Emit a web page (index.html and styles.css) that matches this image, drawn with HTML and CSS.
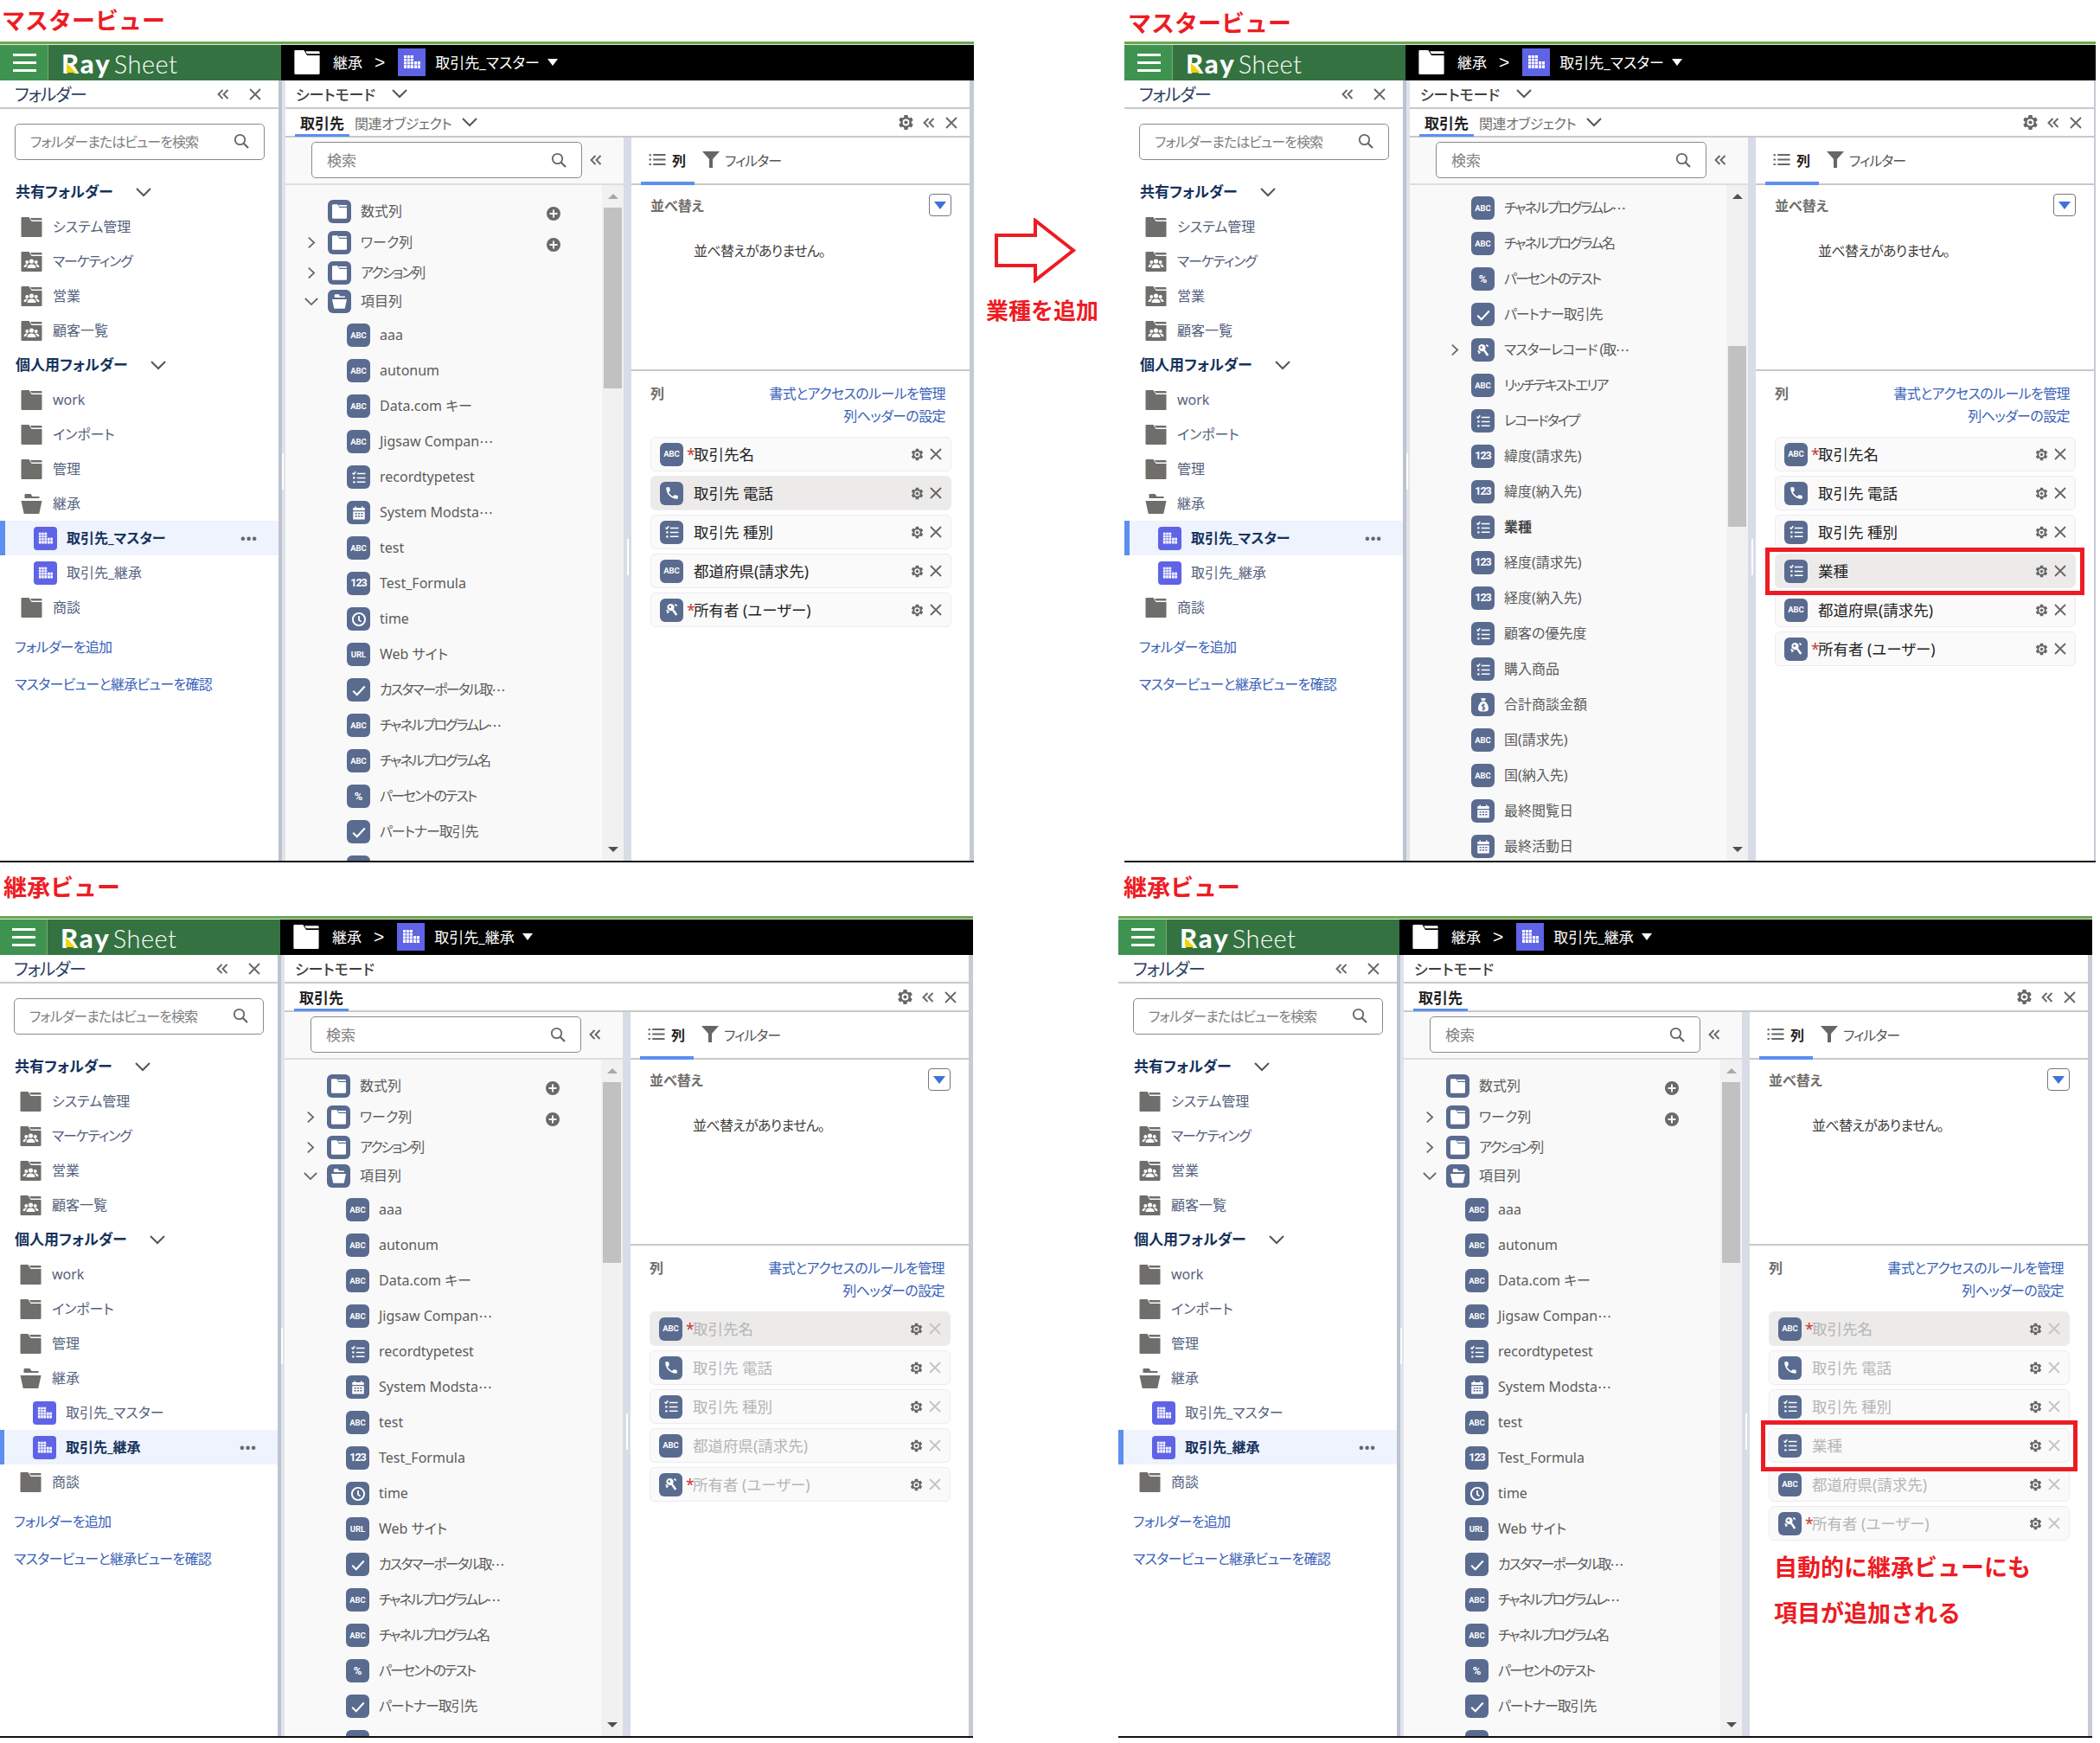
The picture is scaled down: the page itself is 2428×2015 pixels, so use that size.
FILE: index.html
```html
<!DOCTYPE html>
<html lang="ja">
<head>
    <meta charset="UTF-8">
    <title>マスタービューと継承ビュー</title>
    <link rel="stylesheet" href="styles.css">
</head>
<body>
    <svg class="sprite" aria-hidden="true">
        <symbol id="i-folder" viewBox="0 0 24 23"><path d="M1 0h8l3 5h12v17q0 1-1 1H1q-1 0-1-1V1q0-1 1-1zM10.500 1H23q1 0 1 1v1.500H12z"/></symbol>
        <symbol id="i-folder-open" viewBox="0 0 24 23"><path d="M5 0h6l2 3h8v2H4V1q0-1 1-1zM0 8h24l-3 14q0 1-1 1H4q-1 0-1-1z"/></symbol>
        <symbol id="i-group" viewBox="0 0 24 23"><path d="M1 0h8l3 5h12v17q0 1-1 1H1q-1 0-1-1V1q0-1 1-1zM10.500 1H23q1 0 1 1v1.500H12z"/><circle cx="12" cy="11" r="2.600" fill="#fff"/><circle cx="6.800" cy="12" r="2" fill="#fff"/><circle cx="17.200" cy="12" r="2" fill="#fff"/><path d="M7 19q0-4.500 5-4.500t5 4.500zM3 18q0-3.500 3.800-3.500l1 .5q-2 1-2.300 3zM21 18q0-3.500-3.800-3.500l-1 .5q2 1 2.300 3z" fill="#fff"/></symbol>
        <symbol id="i-view" viewBox="0 0 32 32"><path fill="#fff" d="M7 8h11v15H7zM19 15h7v8h-7z"/><path stroke="#5f63e6" stroke-width=".8" fill="none" d="M10.500 8v15M14.300 8v15M7 11.500h11M7 15h11M7 18.700h11M22.500 15v8M19 19h7"/></symbol>
        <symbol id="i-list" viewBox="0 0 24 24"><path fill="none" stroke="currentColor" stroke-width="2" d="M9 6h13M9 12.500h13M9 19h13M2 5l2 2 3-4"/><path fill="currentColor" d="M3 11h3v3H3zM3 17.500h3v3H3z"/></symbol>
        <symbol id="i-rows" viewBox="0 0 24 24"><path fill="none" stroke="currentColor" stroke-width="2.500" d="M6 5h18M6 12h18M6 19h18"/><path fill="currentColor" d="M0 4h3v2.500H0zM0 10.800h3v2.500H0zM0 17.700h3v2.500H0z"/></symbol>
        <symbol id="i-cal" viewBox="0 0 24 24"><path fill="currentColor" d="M6 2h2v2h8V2h2v2h3v4H3V4h3zM3 9.500h18V22H3zM6 12v2h3v-2zM10.500 12v2h3v-2zM15 12v2h3v-2zM6 16v2h3v-2zM10.500 16v2h3v-2zM15 16v2h3v-2z" fill-rule="evenodd"/></symbol>
        <symbol id="i-clock" viewBox="0 0 24 24"><circle cx="12" cy="12" r="9.500" fill="none" stroke="currentColor" stroke-width="2.600"/><path fill="none" stroke="currentColor" stroke-width="2.400" d="M12 6.500V13l3.500 2.500"/></symbol>
        <symbol id="i-check" viewBox="0 0 24 24"><path fill="none" stroke="currentColor" stroke-width="2.800" d="M3 13l6 6L21 6"/></symbol>
        <symbol id="i-phone" viewBox="0 0 24 24"><path fill="currentColor" d="M6.620 10.790c1.440 2.830 3.760 5.140 6.590 6.590l2.200-2.200c.270-.270.670-.360 1.020-.240 1.120.370 2.330.570 3.570.570.550 0 1 .450 1 1V20c0 .550-.450 1-1 1-9.390 0-17-7.610-17-17 0-.550.450-1 1-1h3.500c.550 0 1 .450 1 1 0 1.250.200 2.450.570 3.570.110.350.030.740-.250 1.020l-2.200 2.200z"/></symbol>
        <symbol id="i-key" viewBox="0 0 24 24"><path fill="currentColor" fill-rule="evenodd" d="M10 2.500a5.500 5.500 0 1 1-.01 0zM9 5.500a1.800 1.800 0 1 0 .01 0z"/><path fill="none" stroke="currentColor" stroke-width="3.400" d="M13 11.500l6 8.500"/><path fill="none" stroke="currentColor" stroke-width="2.200" d="M16.500 3.500l3 2.500M3.500 12.500l3 2.500-2 2"/></symbol>
        <symbol id="i-bag" viewBox="0 0 24 24"><path fill="currentColor" d="M8 1.500h8l-2 4h-4zM9.500 6.500h5C18 9 20 13 20 17q0 5-5 5H9q-5 0-5-5c0-4 2-8 5.500-10.500z"/><path fill="none" stroke="#5a6b90" stroke-width="1.500" d="M14.500 12q-2.500-1.300-4-.2t.5 2.500 3 1.700-.5 2.700q-2 .8-4-.5M12 9.500v11"/></symbol>
        <symbol id="i-gear" viewBox="0 0 24 24"><path fill="currentColor" fill-rule="evenodd" d="M19.140 12.940c.040-.300.060-.610.060-.940 0-.320-.020-.640-.070-.940l2.030-1.580a.490.490 0 0 0 .120-.610l-1.920-3.320a.488.488 0 0 0-.590-.220l-2.390.960c-.500-.380-1.030-.700-1.620-.940l-.360-2.540a.484.484 0 0 0-.480-.410h-3.840c-.240 0-.430.170-.470.410l-.360 2.540c-.590.240-1.130.570-1.620.940l-2.390-.960c-.220-.080-.470 0-.590.220L2.740 8.870c-.120.210-.080.470.120.610l2.030 1.580c-.050.300-.090.630-.090.940s.020.640.070.940l-2.030 1.580a.490.490 0 0 0-.120.610l1.920 3.320c.120.220.370.290.590.220l2.390-.960c.500.380 1.030.700 1.620.940l.360 2.540c.050.240.240.410.480.410h3.840c.240 0 .440-.170.470-.410l.360-2.540c.590-.240 1.130-.560 1.620-.940l2.390.96c.220.080.470 0 .590-.220l1.920-3.320c.120-.220.070-.470-.120-.610l-2.010-1.580zM12 16.500a4.500 4.500 0 1 1 0-9 4.500 4.500 0 0 1 0 9z"/><circle cx="12" cy="12" r="2.400" fill="currentColor"/></symbol>
        <symbol id="i-close" viewBox="0 0 14 14"><path fill="none" stroke="currentColor" stroke-width="1.800" d="M1 1l12 12M13 1L1 13"/></symbol>
        <symbol id="i-back" viewBox="0 0 14 12"><path fill="none" stroke="currentColor" stroke-width="1.900" d="M6.500 1L1.500 6l5 5M12.500 1l-5 5 5 5"/></symbol>
        <symbol id="i-down" viewBox="0 0 18 11"><path fill="none" stroke="currentColor" stroke-width="2" d="M1 1l8 8 8-8"/></symbol>
        <symbol id="i-right" viewBox="0 0 11 16"><path fill="none" stroke="currentColor" stroke-width="1.900" d="M2 1.500L9 8l-7 6.500"/></symbol>
        <symbol id="i-search" viewBox="0 0 18 18"><circle cx="7.500" cy="7.500" r="5.700" fill="none" stroke="currentColor" stroke-width="1.800"/><path stroke="currentColor" stroke-width="2.200" d="M11.500 11.500l5.500 5.500"/></symbol>
        <symbol id="i-plus" viewBox="0 0 16 16"><path fill="currentColor" fill-rule="evenodd" d="M8 0a8 8 0 1 1 0 16A8 8 0 0 1 8 0zM7 3.500v3.500H3.500v2H7v3.500h2V9h3.500V7H9V3.500z"/></symbol>
        <symbol id="i-filter" viewBox="0 0 20 19"><path fill="currentColor" d="M0 0h20l-8 9v10H8V9z"/></symbol>
    </svg>

    <main class="board">

        <section class="view">
            <h2 class="view-title">マスタービュー</h2>
            <div class="app">
                <header class="app-bar">
                    <div class="app-menu"><span></span><span></span><span></span></div>
                    <div class="app-logo"><b class="logo-ray">Ray</b><span class="logo-sheet">Sheet</span></div>
                    <div class="crumbs">
                        <svg class="crumb-folder"><use href="#i-folder"/></svg>
                        <span>継承</span><span class="crumb-sep">&gt;</span>
                        <svg class="crumb-view"><use href="#i-view"/></svg>
                        <span>取引先_マスター</span><i class="crumb-caret"></i>
                    </div>
                </header>
                <div class="app-body">
                    <aside class="sidebar">
                        <div class="side-head"><span>フォルダー</span><svg class="ic-back"><use href="#i-back"/></svg><svg class="ic-close"><use href="#i-close"/></svg></div>
                        <div class="search side-search"><span>フォルダーまたはビューを検索</span><svg class="ic-search"><use href="#i-search"/></svg></div>
                        <ul class="folders">
                            <li class="folder-head">共有フォルダー<svg class="ic-down"><use href="#i-down"/></svg></li>
                            <li class="folder"><svg><use href="#i-folder"/></svg>システム管理</li>
                            <li class="folder kana-mix"><svg><use href="#i-group"/></svg>マーケティング</li>
                            <li class="folder"><svg><use href="#i-group"/></svg>営業</li>
                            <li class="folder"><svg><use href="#i-group"/></svg>顧客一覧</li>
                            <li class="folder-head">個人用フォルダー<svg class="ic-down"><use href="#i-down"/></svg></li>
                            <li class="folder"><svg><use href="#i-folder"/></svg>work</li>
                            <li class="folder"><svg><use href="#i-folder"/></svg>インポート</li>
                            <li class="folder"><svg><use href="#i-folder"/></svg>管理</li>
                            <li class="folder"><svg><use href="#i-folder-open"/></svg>継承</li>
                            <li class="view-item is-active"><svg><use href="#i-view"/></svg>取引先_マスター<span class="more">•••</span></li>
                            <li class="view-item"><svg><use href="#i-view"/></svg>取引先_継承</li>
                            <li class="folder"><svg><use href="#i-folder"/></svg>商談</li>
                        </ul>
                        <a class="side-link side-link--add">フォルダーを追加</a>
                        <a class="side-link">マスタービューと継承ビューを確認</a>
                    </aside>
                    <div class="splitter"></div>
                    <div class="sheet">
                        <div class="mode-row">シートモード<svg class="ic-down"><use href="#i-down"/></svg></div>
                        <div class="tab-row">
                            <span class="tab is-active">取引先</span>
                            <span class="tab">関連オブジェクト</span><svg class="ic-down"><use href="#i-down"/></svg>
                            <div class="tab-tools"><svg class="ic-gear"><use href="#i-gear"/></svg><svg class="ic-back"><use href="#i-back"/></svg><svg class="ic-close"><use href="#i-close"/></svg></div>
                        </div>
                        <div class="panes">
                            <div class="fields">
                                <div class="fields-search"><div class="search"><span>検索</span><svg class="ic-search"><use href="#i-search"/></svg></div><svg class="ic-back"><use href="#i-back"/></svg></div>
                                <div class="fields-body">
                                    <ul class="tree">
                                        <li class="node"><span class="twisty"></span><svg class="fi"><use href="#i-folder"/></svg>数式列<svg class="ic-plus"><use href="#i-plus"/></svg></li>
                                        <li class="node"><span class="twisty"><svg><use href="#i-right"/></svg></span><svg class="fi"><use href="#i-folder"/></svg>ワーク列<svg class="ic-plus"><use href="#i-plus"/></svg></li>
                                        <li class="node kana"><span class="twisty"><svg><use href="#i-right"/></svg></span><svg class="fi"><use href="#i-folder"/></svg>アクション列</li>
                                        <li class="node"><span class="twisty"><svg><use href="#i-down"/></svg></span><svg class="fi"><use href="#i-folder-open"/></svg>項目列</li>
                                        <li class="leaf"><i class="fi">ABC</i>aaa</li>
                                        <li class="leaf"><i class="fi">ABC</i>autonum</li>
                                        <li class="leaf"><i class="fi">ABC</i>Data.com キー</li>
                                        <li class="leaf"><i class="fi">ABC</i>Jigsaw Compan<span class="ell">…</span></li>
                                        <li class="leaf"><i class="fi"><svg><use href="#i-list"/></svg></i>recordtypetest</li>
                                        <li class="leaf"><i class="fi"><svg><use href="#i-cal"/></svg></i>System Modsta<span class="ell">…</span></li>
                                        <li class="leaf"><i class="fi">ABC</i>test</li>
                                        <li class="leaf"><i class="fi fi--num">123</i>Test_Formula</li>
                                        <li class="leaf"><i class="fi"><svg><use href="#i-clock"/></svg></i>time</li>
                                        <li class="leaf"><i class="fi">URL</i>Web サイト</li>
                                        <li class="leaf kana"><i class="fi"><svg><use href="#i-check"/></svg></i>カスタマーポータル取<span class="ell">…</span></li>
                                        <li class="leaf kana"><i class="fi">ABC</i>チャネルプログラムレ<span class="ell">…</span></li>
                                        <li class="leaf kana"><i class="fi">ABC</i>チャネルプログラム名</li>
                                        <li class="leaf kana"><i class="fi fi--pct">%</i>パーセントのテスト</li>
                                        <li class="leaf kana-mix"><i class="fi"><svg><use href="#i-check"/></svg></i>パートナー取引先</li>
                                        <li class="leaf"><i class="fi"></i></li>
                                    </ul>
                                    <div class="scroll"><i class="arrow-up"></i><div class="thumb"></div><i class="arrow-down"></i></div>
                                </div>
                            </div>
                            <div class="splitter splitter--inner"></div>
                            <div class="setup">
                                <div class="setup-tabs"><span class="setup-tab is-active"><svg><use href="#i-rows"/></svg><b>列</b></span><span class="setup-tab"><svg><use href="#i-filter"/></svg>フィルター</span></div>
                                <div class="sort">
                                    <div class="sort-head"><b>並べ替え</b><span class="sort-btn"><i></i></span></div>
                                    <p class="sort-empty">並べ替えがありません。</p>
                                </div>
                                <div class="columns">
                                    <div class="columns-head"><b>列</b><div class="columns-links"><a>書式とアクセスのルールを管理</a><a>列ヘッダーの設定</a></div></div>
                                    <ul class="cards">
                                        <li class="card"><i class="fi">ABC</i><span class="req">*</span><span class="card-text">取引先名</span><svg class="ic-gear"><use href="#i-gear"/></svg><svg class="ic-close"><use href="#i-close"/></svg></li>
                                        <li class="card is-hover"><i class="fi"><svg><use href="#i-phone"/></svg></i><span class="card-text">取引先 電話</span><svg class="ic-gear"><use href="#i-gear"/></svg><svg class="ic-close"><use href="#i-close"/></svg></li>
                                        <li class="card"><i class="fi"><svg><use href="#i-list"/></svg></i><span class="card-text">取引先 種別</span><svg class="ic-gear"><use href="#i-gear"/></svg><svg class="ic-close"><use href="#i-close"/></svg></li>
                                        <li class="card"><i class="fi">ABC</i><span class="card-text">都道府県(請求先)</span><svg class="ic-gear"><use href="#i-gear"/></svg><svg class="ic-close"><use href="#i-close"/></svg></li>
                                        <li class="card"><i class="fi"><svg><use href="#i-key"/></svg></i><span class="req">*</span><span class="card-text">所有者 (ユーザー)</span><svg class="ic-gear"><use href="#i-gear"/></svg><svg class="ic-close"><use href="#i-close"/></svg></li>
                                    </ul>
                                </div>
                            </div>
                        </div>
                    </div>
                </div>
                <div class="edge"></div>
            </div>
            <div class="add-note">
                <svg class="add-arrow" viewBox="0 0 95 75"><path d="M2 20h45V3l44 34.500L47 72V55H2z"/></svg>
                <strong>業種を追加</strong>
            </div>
        </section>

        <section class="view view--right">
            <h2 class="view-title">マスタービュー</h2>
            <div class="app">
                <header class="app-bar">
                    <div class="app-menu"><span></span><span></span><span></span></div>
                    <div class="app-logo"><b class="logo-ray">Ray</b><span class="logo-sheet">Sheet</span></div>
                    <div class="crumbs">
                        <svg class="crumb-folder"><use href="#i-folder"/></svg>
                        <span>継承</span><span class="crumb-sep">&gt;</span>
                        <svg class="crumb-view"><use href="#i-view"/></svg>
                        <span>取引先_マスター</span><i class="crumb-caret"></i>
                    </div>
                </header>
                <div class="app-body">
                    <aside class="sidebar">
                        <div class="side-head"><span>フォルダー</span><svg class="ic-back"><use href="#i-back"/></svg><svg class="ic-close"><use href="#i-close"/></svg></div>
                        <div class="search side-search"><span>フォルダーまたはビューを検索</span><svg class="ic-search"><use href="#i-search"/></svg></div>
                        <ul class="folders">
                            <li class="folder-head">共有フォルダー<svg class="ic-down"><use href="#i-down"/></svg></li>
                            <li class="folder"><svg><use href="#i-folder"/></svg>システム管理</li>
                            <li class="folder kana-mix"><svg><use href="#i-group"/></svg>マーケティング</li>
                            <li class="folder"><svg><use href="#i-group"/></svg>営業</li>
                            <li class="folder"><svg><use href="#i-group"/></svg>顧客一覧</li>
                            <li class="folder-head">個人用フォルダー<svg class="ic-down"><use href="#i-down"/></svg></li>
                            <li class="folder"><svg><use href="#i-folder"/></svg>work</li>
                            <li class="folder"><svg><use href="#i-folder"/></svg>インポート</li>
                            <li class="folder"><svg><use href="#i-folder"/></svg>管理</li>
                            <li class="folder"><svg><use href="#i-folder-open"/></svg>継承</li>
                            <li class="view-item is-active"><svg><use href="#i-view"/></svg>取引先_マスター<span class="more">•••</span></li>
                            <li class="view-item"><svg><use href="#i-view"/></svg>取引先_継承</li>
                            <li class="folder"><svg><use href="#i-folder"/></svg>商談</li>
                        </ul>
                        <a class="side-link side-link--add">フォルダーを追加</a>
                        <a class="side-link">マスタービューと継承ビューを確認</a>
                    </aside>
                    <div class="splitter"></div>
                    <div class="sheet">
                        <div class="mode-row">シートモード<svg class="ic-down"><use href="#i-down"/></svg></div>
                        <div class="tab-row">
                            <span class="tab is-active">取引先</span>
                            <span class="tab">関連オブジェクト</span><svg class="ic-down"><use href="#i-down"/></svg>
                            <div class="tab-tools"><svg class="ic-gear"><use href="#i-gear"/></svg><svg class="ic-back"><use href="#i-back"/></svg><svg class="ic-close"><use href="#i-close"/></svg></div>
                        </div>
                        <div class="panes">
                            <div class="fields">
                                <div class="fields-search"><div class="search"><span>検索</span><svg class="ic-search"><use href="#i-search"/></svg></div><svg class="ic-back"><use href="#i-back"/></svg></div>
                                <div class="fields-body">
                                    <ul class="tree tree--scrolled">
                                        <li class="leaf kana"><i class="fi">ABC</i>チャネルプログラムレ<span class="ell">…</span></li>
                                        <li class="leaf kana"><i class="fi">ABC</i>チャネルプログラム名</li>
                                        <li class="leaf kana"><i class="fi fi--pct">%</i>パーセントのテスト</li>
                                        <li class="leaf kana-mix"><i class="fi"><svg><use href="#i-check"/></svg></i>パートナー取引先</li>
                                        <li class="leaf kana-mix"><span class="twisty"><svg><use href="#i-right"/></svg></span><i class="fi"><svg><use href="#i-key"/></svg></i>マスターレコード (取<span class="ell">…</span></li>
                                        <li class="leaf kana"><i class="fi">ABC</i>リッチテキストエリア</li>
                                        <li class="leaf kana"><i class="fi"><svg><use href="#i-list"/></svg></i>レコードタイプ</li>
                                        <li class="leaf"><i class="fi fi--num">123</i>緯度(請求先)</li>
                                        <li class="leaf"><i class="fi fi--num">123</i>緯度(納入先)</li>
                                        <li class="leaf is-used"><i class="fi"><svg><use href="#i-list"/></svg></i>業種</li>
                                        <li class="leaf"><i class="fi fi--num">123</i>経度(請求先)</li>
                                        <li class="leaf"><i class="fi fi--num">123</i>経度(納入先)</li>
                                        <li class="leaf"><i class="fi"><svg><use href="#i-list"/></svg></i>顧客の優先度</li>
                                        <li class="leaf"><i class="fi"><svg><use href="#i-list"/></svg></i>購入商品</li>
                                        <li class="leaf"><i class="fi"><svg><use href="#i-bag"/></svg></i>合計商談金額</li>
                                        <li class="leaf"><i class="fi">ABC</i>国(請求先)</li>
                                        <li class="leaf"><i class="fi">ABC</i>国(納入先)</li>
                                        <li class="leaf"><i class="fi"><svg><use href="#i-cal"/></svg></i>最終閲覧日</li>
                                        <li class="leaf"><i class="fi"><svg><use href="#i-cal"/></svg></i>最終活動日</li>
                                    </ul>
                                    <div class="scroll"><i class="arrow-up arrow-up--dark"></i><div class="thumb thumb--low"></div><i class="arrow-down"></i></div>
                                </div>
                            </div>
                            <div class="splitter splitter--inner"></div>
                            <div class="setup">
                                <div class="setup-tabs"><span class="setup-tab is-active"><svg><use href="#i-rows"/></svg><b>列</b></span><span class="setup-tab"><svg><use href="#i-filter"/></svg>フィルター</span></div>
                                <div class="sort">
                                    <div class="sort-head"><b>並べ替え</b><span class="sort-btn"><i></i></span></div>
                                    <p class="sort-empty">並べ替えがありません。</p>
                                </div>
                                <div class="columns">
                                    <div class="columns-head"><b>列</b><div class="columns-links"><a>書式とアクセスのルールを管理</a><a>列ヘッダーの設定</a></div></div>
                                    <ul class="cards">
                                        <li class="card"><i class="fi">ABC</i><span class="req">*</span><span class="card-text">取引先名</span><svg class="ic-gear"><use href="#i-gear"/></svg><svg class="ic-close"><use href="#i-close"/></svg></li>
                                        <li class="card"><i class="fi"><svg><use href="#i-phone"/></svg></i><span class="card-text">取引先 電話</span><svg class="ic-gear"><use href="#i-gear"/></svg><svg class="ic-close"><use href="#i-close"/></svg></li>
                                        <li class="card"><i class="fi"><svg><use href="#i-list"/></svg></i><span class="card-text">取引先 種別</span><svg class="ic-gear"><use href="#i-gear"/></svg><svg class="ic-close"><use href="#i-close"/></svg></li>
                                        <li class="card is-hover is-marked"><i class="fi"><svg><use href="#i-list"/></svg></i><span class="card-text">業種</span><svg class="ic-gear"><use href="#i-gear"/></svg><svg class="ic-close"><use href="#i-close"/></svg></li>
                                        <li class="card"><i class="fi">ABC</i><span class="card-text">都道府県(請求先)</span><svg class="ic-gear"><use href="#i-gear"/></svg><svg class="ic-close"><use href="#i-close"/></svg></li>
                                        <li class="card"><i class="fi"><svg><use href="#i-key"/></svg></i><span class="req">*</span><span class="card-text">所有者 (ユーザー)</span><svg class="ic-gear"><use href="#i-gear"/></svg><svg class="ic-close"><use href="#i-close"/></svg></li>
                                    </ul>
                                </div>
                            </div>
                        </div>
                    </div>
                </div>
                <div class="edge"></div>
            </div>
        </section>

        <section class="view view--lower view--left-low">
            <h2 class="view-title">継承ビュー</h2>
            <div class="app">
                <header class="app-bar">
                    <div class="app-menu"><span></span><span></span><span></span></div>
                    <div class="app-logo"><b class="logo-ray">Ray</b><span class="logo-sheet">Sheet</span></div>
                    <div class="crumbs">
                        <svg class="crumb-folder"><use href="#i-folder"/></svg>
                        <span>継承</span><span class="crumb-sep">&gt;</span>
                        <svg class="crumb-view"><use href="#i-view"/></svg>
                        <span>取引先_継承</span><i class="crumb-caret"></i>
                    </div>
                </header>
                <div class="app-body">
                    <aside class="sidebar">
                        <div class="side-head"><span>フォルダー</span><svg class="ic-back"><use href="#i-back"/></svg><svg class="ic-close"><use href="#i-close"/></svg></div>
                        <div class="search side-search"><span>フォルダーまたはビューを検索</span><svg class="ic-search"><use href="#i-search"/></svg></div>
                        <ul class="folders">
                            <li class="folder-head">共有フォルダー<svg class="ic-down"><use href="#i-down"/></svg></li>
                            <li class="folder"><svg><use href="#i-folder"/></svg>システム管理</li>
                            <li class="folder kana-mix"><svg><use href="#i-group"/></svg>マーケティング</li>
                            <li class="folder"><svg><use href="#i-group"/></svg>営業</li>
                            <li class="folder"><svg><use href="#i-group"/></svg>顧客一覧</li>
                            <li class="folder-head">個人用フォルダー<svg class="ic-down"><use href="#i-down"/></svg></li>
                            <li class="folder"><svg><use href="#i-folder"/></svg>work</li>
                            <li class="folder"><svg><use href="#i-folder"/></svg>インポート</li>
                            <li class="folder"><svg><use href="#i-folder"/></svg>管理</li>
                            <li class="folder"><svg><use href="#i-folder-open"/></svg>継承</li>
                            <li class="view-item"><svg><use href="#i-view"/></svg>取引先_マスター</li>
                            <li class="view-item is-active"><svg><use href="#i-view"/></svg>取引先_継承<span class="more">•••</span></li>
                            <li class="folder"><svg><use href="#i-folder"/></svg>商談</li>
                        </ul>
                        <a class="side-link side-link--add">フォルダーを追加</a>
                        <a class="side-link">マスタービューと継承ビューを確認</a>
                    </aside>
                    <div class="splitter"></div>
                    <div class="sheet">
                        <div class="mode-row">シートモード</div>
                        <div class="tab-row">
                            <span class="tab is-active">取引先</span>
                            <div class="tab-tools"><svg class="ic-gear"><use href="#i-gear"/></svg><svg class="ic-back"><use href="#i-back"/></svg><svg class="ic-close"><use href="#i-close"/></svg></div>
                        </div>
                        <div class="panes">
                            <div class="fields">
                                <div class="fields-search"><div class="search"><span>検索</span><svg class="ic-search"><use href="#i-search"/></svg></div><svg class="ic-back"><use href="#i-back"/></svg></div>
                                <div class="fields-body">
                                    <ul class="tree">
                                        <li class="node"><span class="twisty"></span><svg class="fi"><use href="#i-folder"/></svg>数式列<svg class="ic-plus"><use href="#i-plus"/></svg></li>
                                        <li class="node"><span class="twisty"><svg><use href="#i-right"/></svg></span><svg class="fi"><use href="#i-folder"/></svg>ワーク列<svg class="ic-plus"><use href="#i-plus"/></svg></li>
                                        <li class="node kana"><span class="twisty"><svg><use href="#i-right"/></svg></span><svg class="fi"><use href="#i-folder"/></svg>アクション列</li>
                                        <li class="node"><span class="twisty"><svg><use href="#i-down"/></svg></span><svg class="fi"><use href="#i-folder-open"/></svg>項目列</li>
                                        <li class="leaf"><i class="fi">ABC</i>aaa</li>
                                        <li class="leaf"><i class="fi">ABC</i>autonum</li>
                                        <li class="leaf"><i class="fi">ABC</i>Data.com キー</li>
                                        <li class="leaf"><i class="fi">ABC</i>Jigsaw Compan<span class="ell">…</span></li>
                                        <li class="leaf"><i class="fi"><svg><use href="#i-list"/></svg></i>recordtypetest</li>
                                        <li class="leaf"><i class="fi"><svg><use href="#i-cal"/></svg></i>System Modsta<span class="ell">…</span></li>
                                        <li class="leaf"><i class="fi">ABC</i>test</li>
                                        <li class="leaf"><i class="fi fi--num">123</i>Test_Formula</li>
                                        <li class="leaf"><i class="fi"><svg><use href="#i-clock"/></svg></i>time</li>
                                        <li class="leaf"><i class="fi">URL</i>Web サイト</li>
                                        <li class="leaf kana"><i class="fi"><svg><use href="#i-check"/></svg></i>カスタマーポータル取<span class="ell">…</span></li>
                                        <li class="leaf kana"><i class="fi">ABC</i>チャネルプログラムレ<span class="ell">…</span></li>
                                        <li class="leaf kana"><i class="fi">ABC</i>チャネルプログラム名</li>
                                        <li class="leaf kana"><i class="fi fi--pct">%</i>パーセントのテスト</li>
                                        <li class="leaf kana-mix"><i class="fi"><svg><use href="#i-check"/></svg></i>パートナー取引先</li>
                                        <li class="leaf"><i class="fi"></i></li>
                                    </ul>
                                    <div class="scroll"><i class="arrow-up"></i><div class="thumb"></div><i class="arrow-down"></i></div>
                                </div>
                            </div>
                            <div class="splitter splitter--inner"></div>
                            <div class="setup">
                                <div class="setup-tabs"><span class="setup-tab is-active"><svg><use href="#i-rows"/></svg><b>列</b></span><span class="setup-tab"><svg><use href="#i-filter"/></svg>フィルター</span></div>
                                <div class="sort">
                                    <div class="sort-head"><b>並べ替え</b><span class="sort-btn"><i></i></span></div>
                                    <p class="sort-empty">並べ替えがありません。</p>
                                </div>
                                <div class="columns">
                                    <div class="columns-head"><b>列</b><div class="columns-links"><a>書式とアクセスのルールを管理</a><a>列ヘッダーの設定</a></div></div>
                                    <ul class="cards cards--locked">
                                        <li class="card is-hover"><i class="fi">ABC</i><span class="req">*</span><span class="card-text">取引先名</span><svg class="ic-gear"><use href="#i-gear"/></svg><svg class="ic-close"><use href="#i-close"/></svg></li>
                                        <li class="card"><i class="fi"><svg><use href="#i-phone"/></svg></i><span class="card-text">取引先 電話</span><svg class="ic-gear"><use href="#i-gear"/></svg><svg class="ic-close"><use href="#i-close"/></svg></li>
                                        <li class="card"><i class="fi"><svg><use href="#i-list"/></svg></i><span class="card-text">取引先 種別</span><svg class="ic-gear"><use href="#i-gear"/></svg><svg class="ic-close"><use href="#i-close"/></svg></li>
                                        <li class="card"><i class="fi">ABC</i><span class="card-text">都道府県(請求先)</span><svg class="ic-gear"><use href="#i-gear"/></svg><svg class="ic-close"><use href="#i-close"/></svg></li>
                                        <li class="card"><i class="fi"><svg><use href="#i-key"/></svg></i><span class="req">*</span><span class="card-text">所有者 (ユーザー)</span><svg class="ic-gear"><use href="#i-gear"/></svg><svg class="ic-close"><use href="#i-close"/></svg></li>
                                    </ul>
                                </div>
                            </div>
                        </div>
                    </div>
                </div>
                <div class="edge"></div>
            </div>
        </section>

        <section class="view view--lower view--right-low">
            <h2 class="view-title">継承ビュー</h2>
            <div class="app">
                <header class="app-bar">
                    <div class="app-menu"><span></span><span></span><span></span></div>
                    <div class="app-logo"><b class="logo-ray">Ray</b><span class="logo-sheet">Sheet</span></div>
                    <div class="crumbs">
                        <svg class="crumb-folder"><use href="#i-folder"/></svg>
                        <span>継承</span><span class="crumb-sep">&gt;</span>
                        <svg class="crumb-view"><use href="#i-view"/></svg>
                        <span>取引先_継承</span><i class="crumb-caret"></i>
                    </div>
                </header>
                <div class="app-body">
                    <aside class="sidebar">
                        <div class="side-head"><span>フォルダー</span><svg class="ic-back"><use href="#i-back"/></svg><svg class="ic-close"><use href="#i-close"/></svg></div>
                        <div class="search side-search"><span>フォルダーまたはビューを検索</span><svg class="ic-search"><use href="#i-search"/></svg></div>
                        <ul class="folders">
                            <li class="folder-head">共有フォルダー<svg class="ic-down"><use href="#i-down"/></svg></li>
                            <li class="folder"><svg><use href="#i-folder"/></svg>システム管理</li>
                            <li class="folder kana-mix"><svg><use href="#i-group"/></svg>マーケティング</li>
                            <li class="folder"><svg><use href="#i-group"/></svg>営業</li>
                            <li class="folder"><svg><use href="#i-group"/></svg>顧客一覧</li>
                            <li class="folder-head">個人用フォルダー<svg class="ic-down"><use href="#i-down"/></svg></li>
                            <li class="folder"><svg><use href="#i-folder"/></svg>work</li>
                            <li class="folder"><svg><use href="#i-folder"/></svg>インポート</li>
                            <li class="folder"><svg><use href="#i-folder"/></svg>管理</li>
                            <li class="folder"><svg><use href="#i-folder-open"/></svg>継承</li>
                            <li class="view-item"><svg><use href="#i-view"/></svg>取引先_マスター</li>
                            <li class="view-item is-active"><svg><use href="#i-view"/></svg>取引先_継承<span class="more">•••</span></li>
                            <li class="folder"><svg><use href="#i-folder"/></svg>商談</li>
                        </ul>
                        <a class="side-link side-link--add">フォルダーを追加</a>
                        <a class="side-link">マスタービューと継承ビューを確認</a>
                    </aside>
                    <div class="splitter"></div>
                    <div class="sheet">
                        <div class="mode-row">シートモード</div>
                        <div class="tab-row">
                            <span class="tab is-active">取引先</span>
                            <div class="tab-tools"><svg class="ic-gear"><use href="#i-gear"/></svg><svg class="ic-back"><use href="#i-back"/></svg><svg class="ic-close"><use href="#i-close"/></svg></div>
                        </div>
                        <div class="panes">
                            <div class="fields">
                                <div class="fields-search"><div class="search"><span>検索</span><svg class="ic-search"><use href="#i-search"/></svg></div><svg class="ic-back"><use href="#i-back"/></svg></div>
                                <div class="fields-body">
                                    <ul class="tree">
                                        <li class="node"><span class="twisty"></span><svg class="fi"><use href="#i-folder"/></svg>数式列<svg class="ic-plus"><use href="#i-plus"/></svg></li>
                                        <li class="node"><span class="twisty"><svg><use href="#i-right"/></svg></span><svg class="fi"><use href="#i-folder"/></svg>ワーク列<svg class="ic-plus"><use href="#i-plus"/></svg></li>
                                        <li class="node kana"><span class="twisty"><svg><use href="#i-right"/></svg></span><svg class="fi"><use href="#i-folder"/></svg>アクション列</li>
                                        <li class="node"><span class="twisty"><svg><use href="#i-down"/></svg></span><svg class="fi"><use href="#i-folder-open"/></svg>項目列</li>
                                        <li class="leaf"><i class="fi">ABC</i>aaa</li>
                                        <li class="leaf"><i class="fi">ABC</i>autonum</li>
                                        <li class="leaf"><i class="fi">ABC</i>Data.com キー</li>
                                        <li class="leaf"><i class="fi">ABC</i>Jigsaw Compan<span class="ell">…</span></li>
                                        <li class="leaf"><i class="fi"><svg><use href="#i-list"/></svg></i>recordtypetest</li>
                                        <li class="leaf"><i class="fi"><svg><use href="#i-cal"/></svg></i>System Modsta<span class="ell">…</span></li>
                                        <li class="leaf"><i class="fi">ABC</i>test</li>
                                        <li class="leaf"><i class="fi fi--num">123</i>Test_Formula</li>
                                        <li class="leaf"><i class="fi"><svg><use href="#i-clock"/></svg></i>time</li>
                                        <li class="leaf"><i class="fi">URL</i>Web サイト</li>
                                        <li class="leaf kana"><i class="fi"><svg><use href="#i-check"/></svg></i>カスタマーポータル取<span class="ell">…</span></li>
                                        <li class="leaf kana"><i class="fi">ABC</i>チャネルプログラムレ<span class="ell">…</span></li>
                                        <li class="leaf kana"><i class="fi">ABC</i>チャネルプログラム名</li>
                                        <li class="leaf kana"><i class="fi fi--pct">%</i>パーセントのテスト</li>
                                        <li class="leaf kana-mix"><i class="fi"><svg><use href="#i-check"/></svg></i>パートナー取引先</li>
                                        <li class="leaf"><i class="fi"></i></li>
                                    </ul>
                                    <div class="scroll"><i class="arrow-up"></i><div class="thumb"></div><i class="arrow-down"></i></div>
                                </div>
                            </div>
                            <div class="splitter splitter--inner"></div>
                            <div class="setup">
                                <div class="setup-tabs"><span class="setup-tab is-active"><svg><use href="#i-rows"/></svg><b>列</b></span><span class="setup-tab"><svg><use href="#i-filter"/></svg>フィルター</span></div>
                                <div class="sort">
                                    <div class="sort-head"><b>並べ替え</b><span class="sort-btn"><i></i></span></div>
                                    <p class="sort-empty">並べ替えがありません。</p>
                                </div>
                                <div class="columns">
                                    <div class="columns-head"><b>列</b><div class="columns-links"><a>書式とアクセスのルールを管理</a><a>列ヘッダーの設定</a></div></div>
                                    <ul class="cards cards--locked">
                                        <li class="card is-hover"><i class="fi">ABC</i><span class="req">*</span><span class="card-text">取引先名</span><svg class="ic-gear"><use href="#i-gear"/></svg><svg class="ic-close"><use href="#i-close"/></svg></li>
                                        <li class="card"><i class="fi"><svg><use href="#i-phone"/></svg></i><span class="card-text">取引先 電話</span><svg class="ic-gear"><use href="#i-gear"/></svg><svg class="ic-close"><use href="#i-close"/></svg></li>
                                        <li class="card"><i class="fi"><svg><use href="#i-list"/></svg></i><span class="card-text">取引先 種別</span><svg class="ic-gear"><use href="#i-gear"/></svg><svg class="ic-close"><use href="#i-close"/></svg></li>
                                        <li class="card is-marked is-marked--wide"><i class="fi"><svg><use href="#i-list"/></svg></i><span class="card-text">業種</span><svg class="ic-gear"><use href="#i-gear"/></svg><svg class="ic-close"><use href="#i-close"/></svg></li>
                                        <li class="card"><i class="fi">ABC</i><span class="card-text">都道府県(請求先)</span><svg class="ic-gear"><use href="#i-gear"/></svg><svg class="ic-close"><use href="#i-close"/></svg></li>
                                        <li class="card"><i class="fi"><svg><use href="#i-key"/></svg></i><span class="req">*</span><span class="card-text">所有者 (ユーザー)</span><svg class="ic-gear"><use href="#i-gear"/></svg><svg class="ic-close"><use href="#i-close"/></svg></li>
                                    </ul>
                                    <div class="auto-note"><p>自動的に継承ビューにも</p><p>項目が追加される</p></div>
                                </div>
                            </div>
                        </div>
                    </div>
                </div>
                <div class="edge"></div>
            </div>
        </section>

    </main>
</body>
</html>
```

FILE: styles.css
```css
:root {
    --red: #ed1c24;
    --navy: #16325c;
    --slate: #54617c;
    --field: #5a6b90;
    --view: #5f63e6;
    --line: #c9c9c9;
    --split: #d8dce6;
    --link: #3a62b8;
    --blue: #5b8ff0;
    --gray: #706e6b;
}

* {
    margin: 0;
    padding: 0;
    box-sizing: border-box;
}

html, body {
    height: 100%;
    overflow: hidden;
}

body {
    background-color: #fff;
    font-family: "Noto Sans", "Noto Sans CJK JP", sans-serif;
    font-size: 16px;
    font-feature-settings: "palt" 1;
    color: #3e3e3c;
}

ul {
    list-style: none;
}

i {
    font-style: normal;
}

svg {
    display: block;
    flex: none;
}

.sprite {
    display: none;
}

.board {
    display: grid;
    grid-template-columns: 1300px 1128px;
    grid-template-rows: 1011px 1004px;
}

/* 4 windows */
.view {
    position: relative;
    width: 1126px;
}

.view--right {
    width: 1123px;
}

.view--left-low {
    margin-left: -1px;
}

.view--right-low {
    margin-left: -7px;
}

.view-title {
    height: 48px;
    padding-left: 2px;
    font-size: 27px;
    line-height: 48px;
    font-weight: 700;
    color: var(--red);
    font-feature-settings: normal;
}

.view--right .view-title {
    padding: 3px 0 0 4px;
}

.view--lower .view-title {
    line-height: 30px;
    padding-left: 5px;
}

.view--right-low .view-title {
    padding-left: 6px;
}

.app {
    position: relative;
    display: flex;
    flex-direction: column;
    height: 949px;
    border-top: 3px solid #6aa84f;
    border-bottom: 2px solid #111;
    overflow: hidden;
}

.view--lower .app {
    height: 950px;
}

/* header bar */
.app-bar {
    display: flex;
    flex: none;
    height: 42px;
    border-top: 1px solid #dfe5da;
    background-color: #000;
    color: #fff;
}

.app-menu {
    display: flex;
    flex-direction: column;
    justify-content: center;
    gap: 6px;
    width: 56px;
    padding: 0 13px 0 15px;
    background-color: #3f9350;
    border-right: 1px solid #7fa86d;
}

.app-menu span {
    height: 3px;
    background-color: #fff;
}

.app-logo {
    display: flex;
    align-items: baseline;
    gap: 3px;
    width: 269px;
    padding: 3px 0 0 15px;
    background-color: #347341;
    line-height: 36px;
    font-feature-settings: normal;
}

.logo-ray {
    position: relative;
    font-family: Lato, sans-serif;
    font-size: 31px;
    font-weight: 900;
    letter-spacing: 2px;
}

.logo-ray::after {
    content: "";
    position: absolute;
    left: 6px;
    bottom: 7px;
    width: 11px;
    height: 11px;
    background-color: #f4d400;
    clip-path: polygon(0 0, 100% 100%, 0 100%);
}

.logo-sheet {
    font-family: Lato, sans-serif;
    font-size: 29px;
    font-weight: 300;
    letter-spacing: .5px;
}

.crumbs {
    display: flex;
    align-items: center;
    padding-left: 15px;
    padding-bottom: 2px;
    font-size: 17px;
}

.crumb-folder {
    width: 30px;
    height: 28px;
    margin-right: 15px;
    fill: #fff;
}

.crumb-sep {
    margin: 0 15px 0 14px;
    font-size: 21px;
    font-family: "Liberation Sans", sans-serif;
}

.crumb-view {
    width: 32px;
    height: 32px;
    margin-right: 11px;
    background-color: var(--view);
}

.crumb-caret {
    width: 0;
    height: 0;
    margin-left: 9px;
    border-left: 6px solid transparent;
    border-right: 6px solid transparent;
    border-top: 8px solid #fff;
}

.app-body {
    display: flex;
    flex: 1;
    min-height: 0;
    width: 1121px;
}

.edge {
    position: absolute;
    top: 42px;
    left: 1121px;
    bottom: 0;
    width: 5px;
    background-color: #c5cad6;
}

.splitter {
    position: relative;
    flex: none;
    width: 8px;
    background: linear-gradient(90deg, #bdc3d0 50%, #dfe3ea 50%);
}

.splitter::after {
    content: "";
    position: absolute;
    top: 431px;
    left: 4px;
    width: 2px;
    height: 42px;
    background-color: #fff;
}

.splitter--inner {
    width: 9px;
    background: var(--split);
}

.splitter--inner::after {
    left: 4px;
    top: 464px;
}

/* left folder list */
.sidebar {
    flex: none;
    width: 322px;
    color: var(--slate);
}

.side-head {
    display: flex;
    align-items: center;
    height: 33px;
    padding-left: 17px;
    border-bottom: 2px solid var(--line);
    font-size: 20px;
    letter-spacing: -1.300px;
    color: #2d3f63;
}

.side-head .ic-back {
    margin-left: auto;
}

.side-head .ic-close {
    margin: 0 20px 0 23px;
}

.ic-back {
    width: 14px;
    height: 12px;
    color: #666;
}

.ic-close {
    width: 14px;
    height: 14px;
    color: #666;
}

.ic-down {
    width: 18px;
    height: 11px;
    color: #555;
}

.ic-gear {
    width: 17px;
    height: 17px;
    color: #666;
}

.ic-search {
    width: 18px;
    height: 18px;
    color: #666;
}

.ic-plus {
    width: 16px;
    height: 16px;
    margin: 8px 48px 0 auto;
    color: #6a6a6a;
}

.search {
    display: flex;
    align-items: center;
    justify-content: space-between;
    height: 42px;
    padding: 0 17px;
    background-color: #fff;
    border: 1px solid #8a8a8a;
    border-radius: 5px;
    font-size: 17px;
    color: #808080;
}

.side-search {
    margin: 17px 16px 17px 17px;
    padding-bottom: 2px;
    font-size: 16px;
    letter-spacing: -1px;
}

.folders {
    line-height: 40px;
}

.folder-head {
    display: flex;
    align-items: center;
    height: 40px;
    padding-left: 18px;
    font-size: 17px;
    font-weight: 700;
    color: var(--navy);
}

.folder-head .ic-down {
    margin-left: 26px;
}

.folder {
    display: flex;
    align-items: center;
    height: 40px;
    padding-left: 24px;
}

.folder svg {
    width: 25px;
    height: 23px;
    margin-right: 12px;
    fill: var(--gray);
}

.view-item {
    display: flex;
    align-items: center;
    height: 40px;
    padding-left: 39px;
    border-left: 0 solid var(--blue);
}

.view-item svg {
    width: 27px;
    height: 27px;
    margin-right: 11px;
    background-color: var(--view);
    border-radius: 4px;
}

.view-item.is-active {
    padding-left: 33px;
    border-left-width: 6px;
    background-color: #eef3fd;
    font-weight: 700;
    color: var(--navy);
}

.more {
    margin-left: auto;
    margin-right: 24px;
    font-size: 15px;
    letter-spacing: 1px;
    color: #666;
}

.side-link {
    display: block;
    padding-left: 17px;
    line-height: 24px;
    letter-spacing: -.7px;
    color: var(--link);
}

.side-link--add {
    margin: 14px 0 19px;
}

/* sheet side */
.sheet {
    display: flex;
    flex-direction: column;
    flex: 1;
    min-width: 0;
}

.mode-row {
    display: flex;
    align-items: center;
    flex: none;
    height: 33px;
    padding-left: 12px;
    border-bottom: 2px solid var(--line);
    font-size: 17px;
    font-weight: 500;
}

.mode-row .ic-down {
    margin-left: 19px;
}

.tab-row {
    display: flex;
    align-items: center;
    flex: none;
    height: 33px;
    padding-left: 11px;
    border-bottom: 2px solid var(--line);
}

.tab {
    display: flex;
    align-items: center;
    height: 33px;
    padding: 0 6px;
    margin-right: 6px;
    color: var(--gray);
}

.tab.is-active {
    height: 33px;
    padding-top: 2px;
    font-size: 17px;
    font-weight: 700;
    color: #222;
    border-bottom: 3px solid var(--blue);
}

.tab + .tab {
    padding: 0;
    margin-right: 0;
    letter-spacing: -.5px;
}

.tab-row > .ic-down {
    margin-left: 12px;
}

.tab-tools {
    display: flex;
    align-items: center;
    gap: 9px;
    margin-left: auto;
    margin-right: 14px;
}

.tab-tools .ic-gear {
    width: 21px;
    height: 21px;
}

.tab-tools .ic-close {
    margin-left: 3px;
}

.panes {
    display: flex;
    flex: 1;
    min-height: 0;
}

.fields {
    display: flex;
    flex-direction: column;
    flex: none;
    width: 391px;
    background-color: #f9f9f9;
}

.fields-search {
    display: flex;
    align-items: center;
    flex: none;
    height: 55px;
    padding: 0 0 2px 30px;
    border-bottom: 2px solid #dedede;
}

.fields-search .search {
    width: 313px;
}

.fields-search .ic-back {
    margin-left: 9px;
}

.fields-body {
    display: flex;
    flex: 1;
    min-height: 0;
}

.tree {
    flex: 1;
    padding-top: 17px;
    overflow: hidden;
    color: #5c5c5c;
}

.tree--scrolled {
    padding-top: 13px;
}

.node,
.leaf {
    display: flex;
    align-items: center;
}

.node {
    height: 35px;
    padding-left: 20px;
    align-items: flex-start;
    line-height: 27px;
}

.node:nth-child(1) {
    height: 36px;
}

.node:nth-child(3) {
    height: 33px;
}

.node:nth-child(4) {
    height: 39px;
}

.leaf {
    height: 41px;
    padding-left: 71px;
    align-items: flex-start;
    line-height: 27px;
}

.leaf .twisty {
    margin-left: -29px;
}

.leaf.is-used {
    font-weight: 700;
    color: #444;
}

.kana {
    letter-spacing: -2px;
}

.kana-mix {
    letter-spacing: -1.100px;
}

.twisty {
    display: flex;
    align-items: center;
    flex: none;
    width: 29px;
    height: 27px;
    color: #666;
}

.twisty svg {
    width: 10px;
    height: 15px;
    margin-left: 5px;
}

.twisty svg:has(use[href="#i-down"]) {
    width: 16px;
    height: 10px;
    margin-left: 2px;
}

.fi {
    display: flex;
    align-items: center;
    justify-content: center;
    flex: none;
    width: 27px;
    height: 27px;
    margin-right: 11px;
    padding: 5px;
    background-color: var(--field);
    border-radius: 6px;
    font-family: Roboto, sans-serif;
    font-size: 9.500px;
    font-weight: 700;
    line-height: 1;
    letter-spacing: 0;
    color: #fff;
    fill: #fff;
}

.fi svg {
    width: 18px;
    height: 18px;
}

.fi--num {
    font-size: 12.500px;
    letter-spacing: -1px;
}

.fi--pct {
    font-size: 13px;
}

.ell {
    font-family: "Noto Sans CJK JP", sans-serif;
    letter-spacing: 0;
}

.scroll {
    display: flex;
    flex-direction: column;
    align-items: center;
    flex: none;
    width: 25px;
    background-color: #f1f1f1;
}

.arrow-up {
    width: 0;
    height: 0;
    margin: 10px 0 10px;
    border-left: 6px solid transparent;
    border-right: 6px solid transparent;
    border-bottom: 6px solid #a8a8a8;
}

.arrow-up--dark {
    border-bottom-color: #505050;
}

.arrow-down {
    width: 0;
    height: 0;
    margin: auto 0 10px;
    border-left: 6px solid transparent;
    border-right: 6px solid transparent;
    border-top: 6px solid #505050;
}

.thumb {
    flex: none;
    width: 21px;
    height: 209px;
    background-color: #c1c1c1;
}

.thumb--low {
    margin-top: 160px;
}

/* right setup pane */
.setup {
    display: flex;
    flex-direction: column;
    flex: 1;
    min-width: 0;
}

.setup-tabs {
    display: flex;
    flex: none;
    gap: 2px;
    height: 55px;
    padding-left: 11px;
    border-bottom: 2px solid var(--line);
}

.setup-tab {
    display: flex;
    align-items: center;
    gap: 6px;
    height: 55px;
    padding: 0 10px 4px 7px;
    letter-spacing: -1px;
    color: #555;
}

.setup-tab.is-active {
    width: 62px;
    gap: 7px;
    padding: 0 0 0 9px;
    border-bottom: 4px solid var(--blue);
    color: #222;
}

.setup-tab svg {
    width: 20px;
    height: 19px;
    color: #666;
}

.sort {
    flex: none;
    height: 215px;
    padding: 10px 21px 0 22px;
    border-bottom: 2px solid var(--line);
}

.sort-head {
    display: flex;
    align-items: center;
    justify-content: space-between;
    height: 26px;
    color: var(--gray);
}

.sort-head b {
    font-weight: 700;
}

.sort-btn {
    display: flex;
    align-items: center;
    justify-content: center;
    width: 26px;
    height: 26px;
    background-color: #fff;
    border: 1px solid #777;
    border-radius: 4px;
}

.sort-btn i {
    border-left: 7px solid transparent;
    border-right: 7px solid transparent;
    border-top: 9px solid #3d72d8;
}

.sort-empty {
    margin: 28px 0 0 50px;
    line-height: 24px;
    letter-spacing: -.7px;
    color: #3e3e3c;
}

.columns {
    flex: 1;
    padding: 13px 21px 0 22px;
}

.columns-head {
    display: flex;
    justify-content: space-between;
    padding-right: 7px;
    height: 63px;
    color: var(--gray);
}

.columns-head b {
    line-height: 26px;
}

.columns-links {
    display: flex;
    flex-direction: column;
    align-items: flex-end;
    line-height: 26px;
    letter-spacing: -.6px;
}

.columns-links a {
    color: var(--link);
}

.cards {
    display: flex;
    flex-direction: column;
    gap: 5px;
}

.card {
    position: relative;
    display: flex;
    align-items: center;
    height: 40px;
    padding: 0 10px;
    background-color: #fafafb;
    border: 1px solid #ecebf3;
    border-radius: 6px;
    font-size: 17.500px;
    color: #222;
}

.card .fi {
    margin-right: 12px;
}

.card-text {
    padding-bottom: 2px;
}

.req {
    width: 8px;
    margin-left: -8px;
    color: #c23934;
}

.card .ic-gear {
    margin-left: auto;
}

.card .ic-close {
    margin-left: 6px;
}

.is-hover {
    background-color: #ecebea;
}

.is-marked {
    z-index: 1;
}

.is-marked::after {
    content: "";
    position: absolute;
    top: -8px;
    left: -12px;
    right: -11px;
    bottom: -9px;
    border: 5px solid var(--red);
}

.is-marked--wide::after {
    top: -10px;
    left: -10px;
    right: -10px;
    bottom: -11px;
}

.cards--locked .card-text {
    color: #b5b5b5;
}

.cards--locked .ic-close {
    color: #c4c4c4;
}

.auto-note {
    margin-top: 4px;
    padding-left: 6px;
    font-size: 27px;
    font-weight: 700;
    line-height: 53px;
    color: var(--red);
    font-feature-settings: normal;
}

/* arrow between the two upper windows */
.add-note {
    position: absolute;
    top: 252px;
    left: 1140px;
    white-space: nowrap;
}

.add-arrow {
    width: 95px;
    height: 75px;
    margin-left: 10px;
    fill: none;
    stroke: var(--red);
    stroke-width: 4;
}

.add-note strong {
    display: block;
    margin-top: 16px;
    font-size: 26px;
    line-height: 32px;
    color: var(--red);
    font-feature-settings: normal;
}
```
